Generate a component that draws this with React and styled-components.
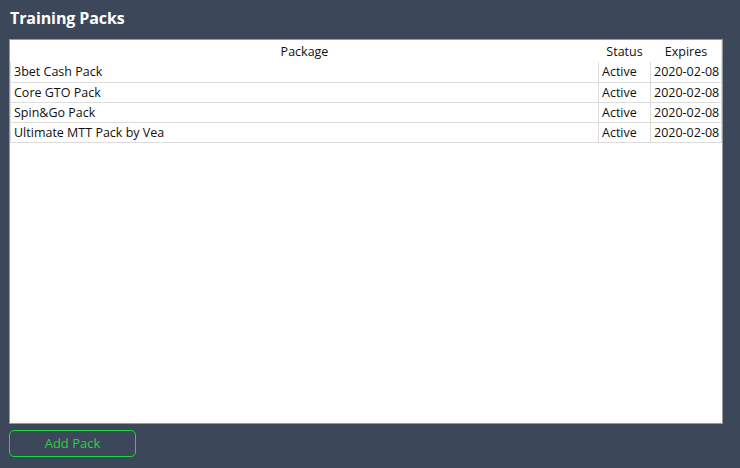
import React from 'react';
import styled, { createGlobalStyle } from 'styled-components';

const Global = createGlobalStyle`
  html, body {
    margin: 0;
    padding: 0;
    background: #3c4859;
  }
  * { box-sizing: border-box; }
`;

const Page = styled.div`
  width: 740px;
  height: 468px;
  background: #3c4859;
  padding: 6px 9px 0 9px;
  display: flex;
  flex-direction: column;
  font-family: 'Open Sans', 'Liberation Sans', sans-serif;
`;

const Title = styled.h1`
  margin: 0;
  height: 25px;
  font-size: 16px;
  font-weight: 700;
  color: #ffffff;
  line-height: 24px;
  padding-left: 1px;
  letter-spacing: -0.1px;
`;

const Panel = styled.div`
  margin-top: 8px;
  width: 714px;
  height: 385px;
  background: #ffffff;
  border: 1px solid #9a9a9a;
  overflow: hidden;
`;

const Table = styled.table`
  width: 712px;
  table-layout: fixed;
  border-collapse: collapse;
  font-size: 12.5px;
  color: #111;
`;

const Th = styled.th`
  font-weight: 400;
  height: 22px;
  padding: 1px 2px 0;
  text-align: center;
  border-left: 1px solid ${(p) => (p.$first ? 'transparent' : '#e0e0e0')};
  border-right: 1px solid ${(p) => (p.$last ? '#e0e0e0' : 'transparent')};
  width: ${(p) => p.$w || 'auto'};
`;

const Td = styled.td`
  height: 20px;
  padding: 0 3px;
  white-space: nowrap;
  overflow: hidden;
  border: 1px solid #dcdcdc;
  border-top: none;
`;

const AddButton = styled.button`
  margin-top: 6px;
  width: 127px;
  height: 27px;
  padding: 0 0 2px;
  background: #3c4859;
  border: 1px solid #1ed83c;
  border-radius: 5px;
  color: #28cf44;
  font-family: inherit;
  font-size: 13px;
  cursor: pointer;
`;

const packs = [
  '3bet Cash Pack',
  'Core GTO Pack',
  'Spin&Go Pack',
  'Ultimate MTT Pack by Vea',
];

export default function App() {
  return (
    <>
      <Global />
      <Page>
        <Title>Training Packs</Title>
        <Panel>
          <Table>
            <thead>
              <tr>
                <Th $first>Package</Th>
                <Th $w="52px">Status</Th>
                <Th $w="71px" $last>Expires</Th>
              </tr>
            </thead>
            <tbody>
              {packs.map((name) => (
                <tr key={name}>
                  <Td>{name}</Td>
                  <Td>Active</Td>
                  <Td>2020-02-08</Td>
                </tr>
              ))}
            </tbody>
          </Table>
        </Panel>
        <AddButton>Add Pack</AddButton>
      </Page>
    </>
  );
}
